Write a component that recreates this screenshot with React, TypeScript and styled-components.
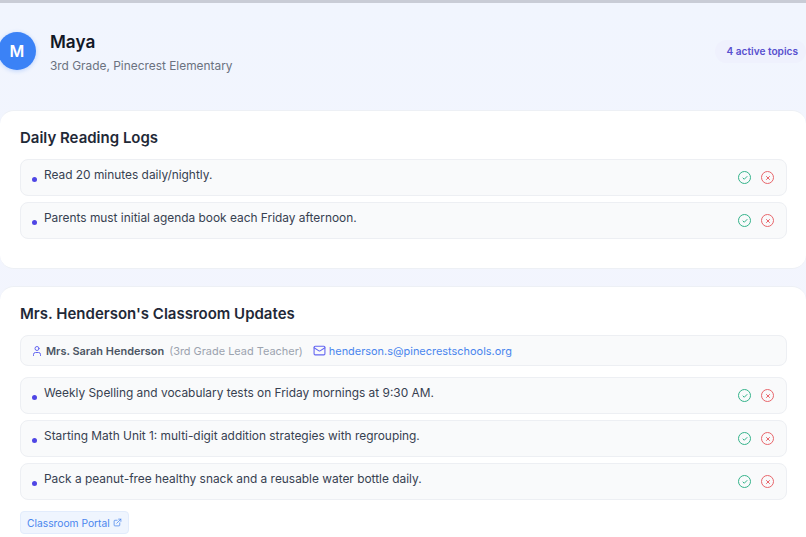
import React from "react";
import styled, {createGlobalStyle} from "styled-components";
import {Check, ExternalLink, Mail, User, X} from "lucide-react";

const GlobalStyle = createGlobalStyle`
  html, body {
    margin: 0;
    padding: 0;
    height: 100%;
    overflow: hidden;
    background: #f4f6fc;
    font-family: Inter, "Liberation Sans", sans-serif;
  }
  * { box-sizing: border-box; }
`;

const Page = styled.div`
  width: 806px;
  height: 537px;
  overflow: hidden;
  border-top: 3px solid #c9ccd6;
  background: linear-gradient(180deg, #f1f5fe 0%, #f4f5fd 100%);
`;

const Header = styled.header`
  display: flex;
  align-items: center;
  justify-content: space-between;
  height: 107px;
  padding: 0 0 12px 0;
`;

const Profile = styled.div`
  display: flex;
  align-items: center;
  gap: 14px;
  margin-left: -2px;
`;

const Avatar = styled.div`
  display: flex;
  align-items: center;
  justify-content: center;
  width: 38px;
  height: 38px;
  border-radius: 50%;
  background: #3b82f6;
  color: #fff;
  font-size: 16px;
  font-weight: 600;
  box-shadow: 0 1px 4px rgba(59, 130, 246, 0.3);
`;

const Info = styled.div`
  padding-top: 5px;
`;

const Name = styled.h1`
  margin: 0 0 4px;
  font-size: 17.2px;
  line-height: 22px;
  font-weight: 600;
  color: #111827;
`;

const School = styled.div`
  font-size: 11.9px;
  line-height: 18px;
  color: #6b7280;
`;

const Badge = styled.div`
  margin-top: 2px;
  padding: 5px 8px 5px 11px;
  border-radius: 12px;
  background: #eff1fd;
  color: #5850cf;
  font-size: 10.15px;
  line-height: 13px;
  font-weight: 600;
`;

const Card = styled.section`
  display: flex;
  flex-direction: column;
  gap: 6px;
  margin-bottom: 17px;
  padding: 17px 19px 29px 20px;
  background: #fff;
  border: 1px solid #edf0f5;
  border-right: none;
  border-left: none;
  border-radius: 14px;
`;

const CardTitle = styled.h2`
  margin: 0 0 5px;
  font-size: 15px;
  line-height: 20px;
  font-weight: 600;
  color: #1f2937;
`;

const Row = styled.div`
  display: flex;
  align-items: center;
  justify-content: space-between;
  height: 37px;
  padding: 0 12px 0 10px;
  background: #f9fafb;
  border: 1px solid #edeff3;
  border-radius: 8px;
`;

const RowText = styled.div`
  display: flex;
  align-items: center;
  gap: 7px;
  margin-top: -5px;
  font-size: 11.9px;
  line-height: 18px;
  color: #374151;
`;

const Bullet = styled.span`
  width: 5px;
  height: 5px;
  margin: 8px 0 0 1px;
  border-radius: 50%;
  background: #4f46e5;
`;

const Actions = styled.div`
  display: flex;
  align-items: center;
  gap: 10px;
`;

const Action = styled.span<{$tone: string}>`
  display: flex;
  align-items: center;
  justify-content: center;
  width: 13px;
  height: 13px;
  border: 1.7px solid ${p => p.$tone};
  border-radius: 50%;
  color: ${p => p.$tone};
`;

const Teacher = styled.div`
  display: flex;
  align-items: center;
  height: 31px;
  margin-bottom: 5px;
  padding: 0 10px;
  background: #f9fafb;
  border: 1px solid #edeff3;
  border-radius: 8px;
  font-size: 10.95px;
  color: #4b5563;
`;

const TeacherName = styled.strong`
  margin-left: 3px;
  font-weight: 600;
`;

const TeacherRole = styled.span`
  margin-left: 5px;
  color: #9ca3af;
`;

const MailLink = styled.a`
  display: flex;
  align-items: center;
  gap: 3px;
  margin-left: 10px;
  color: #4a86ee;
`;

const Portal = styled.a`
  display: inline-flex;
  align-items: center;
  gap: 3px;
  align-self: flex-start;
  height: 23px;
  margin-top: 5px;
  padding: 0 6px 0 6px;
  background: #eff5fe;
  border: 1px solid #e2ecfc;
  border-radius: 4px;
  color: #4a86ee;
  font-size: 10.25px;
`;

const Item: React.FC<{text: string}> = ({text}) => (
  <Row>
    <RowText>
      <Bullet/>
      {text}
    </RowText>
    <Actions>
      <Action $tone="#34b38a"><Check size={6} strokeWidth={4}/></Action>
      <Action $tone="#e8666b"><X size={6} strokeWidth={4}/></Action>
    </Actions>
  </Row>
);

const App: React.FC = () => (
  <Page>
    <GlobalStyle/>
    <Header>
      <Profile>
        <Avatar>M</Avatar>
        <Info>
          <Name>Maya</Name>
          <School>3rd Grade, Pinecrest Elementary</School>
        </Info>
      </Profile>
      <Badge>4 active topics</Badge>
    </Header>
    <Card>
      <CardTitle>Daily Reading Logs</CardTitle>
      <Item text="Read 20 minutes daily/nightly."/>
      <Item text="Parents must initial agenda book each Friday afternoon."/>
    </Card>
    <Card>
      <CardTitle>Mrs. Henderson's Classroom Updates</CardTitle>
      <Teacher>
        <User size={12} color="#6366f1"/>
        <TeacherName>Mrs. Sarah Henderson</TeacherName>
        <TeacherRole>(3rd Grade Lead Teacher)</TeacherRole>
        <MailLink><Mail size={13} color="#6366f1"/>henderson.s@pinecrestschools.org</MailLink>
      </Teacher>
      <Item text="Weekly Spelling and vocabulary tests on Friday mornings at 9:30 AM."/>
      <Item text="Starting Math Unit 1: multi-digit addition strategies with regrouping."/>
      <Item text="Pack a peanut-free healthy snack and a reusable water bottle daily."/>
      <Portal>Classroom Portal <ExternalLink size={9}/></Portal>
    </Card>
  </Page>
);

export default App;
